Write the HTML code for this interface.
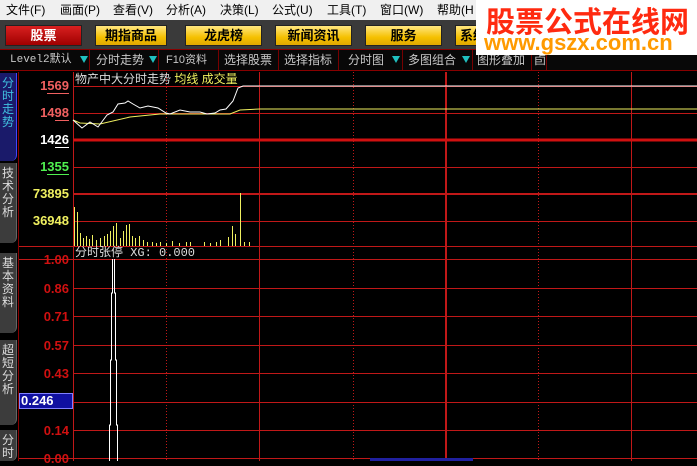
<!DOCTYPE html>
<html><head><meta charset="utf-8"><style>
*{margin:0;padding:0;box-sizing:border-box}
body{width:697px;height:461px;overflow:hidden;background:#000;font-family:"Liberation Sans","Noto Sans CJK SC",sans-serif;position:relative}
.menu{position:absolute;left:0;top:0;width:697px;height:20px;background:#f0f0f0;font-size:12px;color:#000;line-height:20px}
.menu span{position:absolute;top:0}
.btnrow{position:absolute;left:0;top:20px;width:697px;height:29px;background:#3a3a3a}
.btn{position:absolute;top:5px;height:21px;border:1px solid #222;font-weight:bold;font-size:13px;line-height:19px;text-align:center;color:#000;background:linear-gradient(#ffe680,#f5c000 60%,#e0a800)}
.btn.red{background:linear-gradient(#d82020,#a00000);color:#fff}
.tool{position:absolute;left:0;top:49px;width:697px;height:22px;background:#080808;border-top:1px solid #800;border-bottom:1px solid #800}
.tool span{position:absolute;top:2px;font-size:12px;color:#c8c8c8;line-height:16px}
.sep{position:absolute;top:0;width:1px;height:20px;background:#700}
.tri{position:absolute;top:6px;width:0;height:0;border-left:4px solid transparent;border-right:4px solid transparent;border-top:7px solid #20c0c0}
.logo{position:absolute;left:476px;top:0;width:221px;height:55px;background:#fff}
.logo .a{position:absolute;left:10px;top:-1px;font-size:29px;font-weight:bold;color:#ff2a10;letter-spacing:0px;white-space:nowrap}
.logo .b{position:absolute;left:8px;top:30px;font-size:22px;font-weight:bold;color:#ff9a00;white-space:nowrap}
.tab{position:absolute;left:0;width:17px;background:#3c3c3c;border-right:1px solid #666;color:#ddd;font-size:12px;line-height:13px;text-align:center;padding-top:4px;border-radius:0 0 6px 0}
.lab{position:absolute;right:628px;font-size:13px;font-weight:bold;font-family:"Liberation Sans",sans-serif;text-align:right;line-height:14px}
.lab u{text-decoration:none;border-bottom:1px solid currentColor}
</style></head><body>
<div class="menu">
<span style="left:6px">文件(F)</span><span style="left:60px">画面(P)</span><span style="left:113px">查看(V)</span><span style="left:166px">分析(A)</span><span style="left:220px">决策(L)</span><span style="left:272px">公式(U)</span><span style="left:327px">工具(T)</span><span style="left:380px">窗口(W)</span><span style="left:437px">帮助(H</span>
</div>
<div class="btnrow">
<div class="btn red" style="left:5px;width:77px">股票</div>
<div class="btn" style="left:95px;width:72px">期指商品</div>
<div class="btn" style="left:185px;width:77px">龙虎榜</div>
<div class="btn" style="left:275px;width:77px">新闻资讯</div>
<div class="btn" style="left:365px;width:77px">服务</div>
<div class="btn" style="left:455px;width:40px;text-align:left;padding-left:4px">系统</div>
</div>
<div class="tool">
<span style="left:10px;font-family:'Liberation Mono','Noto Sans CJK SC',monospace;font-size:11px">Level2默认</span><div class="tri" style="left:80px"></div><div class="sep" style="left:89px"></div>
<span style="left:96px">分时走势</span><div class="tri" style="left:149px"></div><div class="sep" style="left:158px"></div>
<span style="left:166px;font-size:11px">F10资料</span><div class="sep" style="left:218px"></div>
<span style="left:224px">选择股票</span><div class="sep" style="left:278px"></div>
<span style="left:284px">选择指标</span><div class="sep" style="left:338px"></div>
<span style="left:348px">分时图</span><div class="tri" style="left:392px"></div><div class="sep" style="left:402px"></div>
<span style="left:408px">多图组合</span><div class="tri" style="left:462px"></div><div class="sep" style="left:472px"></div>
<span style="left:477px">图形叠加</span><div class="sep" style="left:531px"></div>
<span style="left:534px">卣</span><div class="sep" style="left:546px"></div>
</div>
<div class="logo"><div class="a">股票公式在线网</div><div class="b">www.gszx.com.cn</div></div>

<div class="tab" style="top:73px;height:88px;background:#1a1a6a;color:#40c0e0;border-right:1px solid #44f">分<br>时<br>走<br>势</div>
<div class="tab" style="top:163px;height:80px">技<br>术<br>分<br>析</div>
<div class="tab" style="top:253px;height:80px">基<br>本<br>资<br>料</div>
<div class="tab" style="top:340px;height:85px">超<br>短<br>分<br>析</div>
<div class="tab" style="top:430px;height:31px">分<br>时</div>

<svg style="position:absolute;left:0;top:0" width="697" height="461">
<g stroke="#c01818" stroke-width="1" fill="none">
<line x1="73" y1="86.5" x2="697" y2="86.5"/><line x1="73" y1="113.5" x2="697" y2="113.5"/>
<line x1="73" y1="167.5" x2="697" y2="167.5"/><line x1="73" y1="194" x2="697" y2="194" stroke-width="2"/>
<line x1="73" y1="221.5" x2="697" y2="221.5"/><line x1="18" y1="246.5" x2="697" y2="246.5"/>
<line x1="18" y1="259.5" x2="697" y2="259.5"/>
<line x1="73" y1="288.5" x2="697" y2="288.5"/><line x1="73" y1="316.5" x2="697" y2="316.5"/>
<line x1="73" y1="345.5" x2="697" y2="345.5"/><line x1="73" y1="373.5" x2="697" y2="373.5"/>
<line x1="73" y1="402.5" x2="697" y2="402.5"/><line x1="73" y1="430.5" x2="697" y2="430.5"/>
<line x1="18" y1="458.5" x2="697" y2="458.5"/>
<line x1="73.5" y1="72" x2="73.5" y2="461"/><line x1="259.5" y1="72" x2="259.5" y2="461"/>
<line x1="446" y1="72" x2="446" y2="461" stroke-width="2"/><line x1="631.5" y1="72" x2="631.5" y2="461"/>
<line x1="18.5" y1="72" x2="18.5" y2="461" stroke="#800"/>
</g>
<line x1="73" y1="140" x2="697" y2="140" stroke="#d01010" stroke-width="3"/>
<g stroke="#c01818" stroke-dasharray="1,2" fill="none">
<line x1="166.5" y1="72" x2="166.5" y2="461"/><line x1="353.5" y1="72" x2="353.5" y2="461"/><line x1="538.5" y1="72" x2="538.5" y2="461"/>
</g>
<polyline fill="none" stroke="#f0f060" stroke-width="1" points="73,120 80,123 100,124 130,117 160,114 230,114 240,110 260,109 697,109"/>
<polyline fill="none" stroke="#fff" stroke-width="1" points="73,120 82,128 90,122 98,127 107,115 113,112 118,104 125,103 128,101 133,104 140,108 148,106 158,108 166,113 170,114 180,110 190,112 200,112 207,114 215,113 220,110 226,109 233,101 238,88 243,86 697,86"/>
<g stroke="#f0f060" stroke-width="1">
<line x1="74.5" y1="246" x2="74.5" y2="207"/><line x1="77.5" y1="246" x2="77.5" y2="212"/><line x1="80.5" y1="246" x2="80.5" y2="233"/>
<line x1="83.5" y1="246" x2="83.5" y2="238"/><line x1="86.5" y1="246" x2="86.5" y2="236"/><line x1="89.5" y1="246" x2="89.5" y2="239"/>
<line x1="92.5" y1="246" x2="92.5" y2="235"/><line x1="96.5" y1="246" x2="96.5" y2="240"/><line x1="100.5" y1="246" x2="100.5" y2="238"/>
<line x1="104.5" y1="246" x2="104.5" y2="236"/><line x1="107.5" y1="246" x2="107.5" y2="234"/><line x1="110.5" y1="246" x2="110.5" y2="231"/>
<line x1="113.5" y1="246" x2="113.5" y2="226"/><line x1="116.5" y1="246" x2="116.5" y2="223"/><line x1="120.5" y1="246" x2="120.5" y2="238"/>
<line x1="123.5" y1="246" x2="123.5" y2="231"/><line x1="126.5" y1="246" x2="126.5" y2="225"/><line x1="129.5" y1="246" x2="129.5" y2="224"/>
<line x1="132.5" y1="246" x2="132.5" y2="236"/><line x1="135.5" y1="246" x2="135.5" y2="238"/><line x1="139.5" y1="246" x2="139.5" y2="236"/>
<line x1="143.5" y1="246" x2="143.5" y2="240"/><line x1="147.5" y1="246" x2="147.5" y2="242"/><line x1="152.5" y1="246" x2="152.5" y2="242"/>
<line x1="156.5" y1="246" x2="156.5" y2="243"/><line x1="160.5" y1="246" x2="160.5" y2="242"/><line x1="166.5" y1="246" x2="166.5" y2="243"/>
<line x1="172.5" y1="246" x2="172.5" y2="241"/><line x1="179.5" y1="246" x2="179.5" y2="243"/><line x1="186.5" y1="246" x2="186.5" y2="242"/>
<line x1="190.5" y1="246" x2="190.5" y2="242"/><line x1="204.5" y1="246" x2="204.5" y2="242"/><line x1="210.5" y1="246" x2="210.5" y2="243"/>
<line x1="216.5" y1="246" x2="216.5" y2="242"/><line x1="220.5" y1="246" x2="220.5" y2="240"/><line x1="228.5" y1="246" x2="228.5" y2="237"/>
<line x1="232.5" y1="246" x2="232.5" y2="226"/><line x1="235.5" y1="246" x2="235.5" y2="234"/><line x1="240.5" y1="246" x2="240.5" y2="193"/>
<line x1="244.5" y1="246" x2="244.5" y2="242"/><line x1="249.5" y1="246" x2="249.5" y2="242"/>
</g>
<g stroke="#fff" stroke-width="1" fill="none">
<polyline points="112.5,259 112.5,293 111.5,293 111.5,360 110.5,360 110.5,425 109.5,425 109.5,461"/>
<polyline points="114.5,259 114.5,293 115.5,293 115.5,360 116.5,360 116.5,425 117.5,425 117.5,461"/>
</g>
<rect x="370" y="458" width="103" height="3" fill="#2020a0"/>
</svg>

<div style="position:absolute;left:75px;top:72px;font-size:12px;color:#ddd;line-height:14px;white-space:nowrap">物产中大分时走势 <span style="color:#f0f060">均线 成交量</span></div>
<div style="position:absolute;left:75px;top:246px;font-size:12px;color:#ddd;line-height:14px;white-space:nowrap;font-family:'Liberation Mono','Noto Sans CJK SC',monospace">分时张停 XG: 0.000</div>

<div class="lab" style="top:79px;color:#f06060">1<u>569</u></div>
<div class="lab" style="top:106px;color:#f06060">14<u>98</u></div>
<div class="lab" style="top:133px;color:#fff">14<u>26</u></div>
<div class="lab" style="top:160px;color:#50f050">1<u>355</u></div>
<div class="lab" style="top:187px;color:#f0f060">73895</div>
<div class="lab" style="top:214px;color:#f0f060">36948</div>
<div class="lab" style="top:253px;color:#d01010">1.00</div>
<div class="lab" style="top:282px;color:#d01010">0.86</div>
<div class="lab" style="top:310px;color:#d01010">0.71</div>
<div class="lab" style="top:339px;color:#d01010">0.57</div>
<div class="lab" style="top:367px;color:#d01010">0.43</div>
<div class="lab" style="top:424px;color:#d01010">0.14</div>
<div class="lab" style="top:452px;color:#d01010">0.00</div>
<div style="position:absolute;left:19px;top:393px;width:54px;height:16px;background:#1010a0;border:1px solid #8080ff;color:#fff;font-size:13px;font-weight:bold;line-height:14px;padding-left:1px">0.246</div>
</body></html>
